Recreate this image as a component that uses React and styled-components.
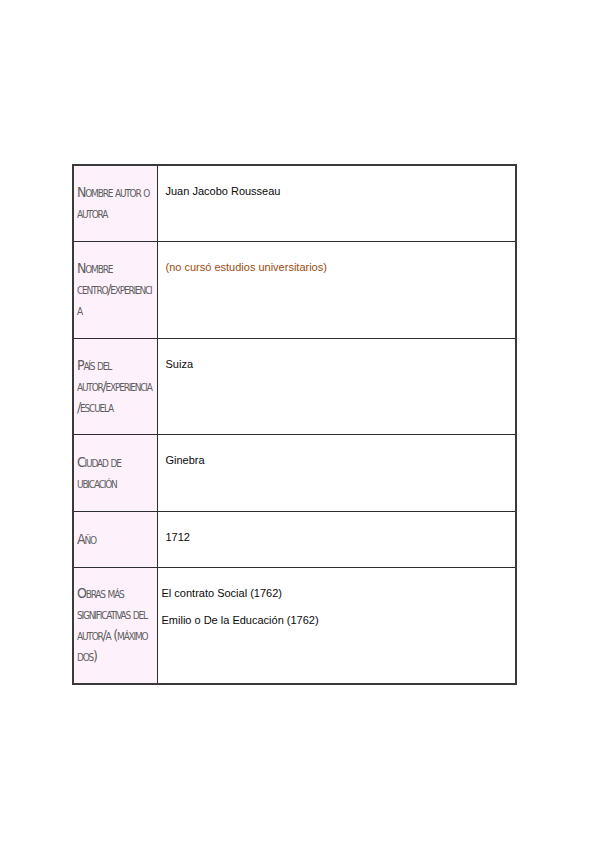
import { createGlobalStyle, styled } from 'styled-components';

const GlobalStyle = createGlobalStyle`
  html, body {
    margin: 0;
    padding: 0;
    background: #ffffff;
  }
`;

const rows = [
  { label: ['Nombre autor o', 'autora'], height: 76, content: ['Juan Jacobo Rousseau'] },
  { label: ['Nombre', 'centro/experienci', 'a'], height: 97, content: ['(no cursó estudios universitarios)'], muted: true },
  { label: ['País del', 'autor/experiencia', '/escuela'], height: 96, content: ['Suiza'] },
  { label: ['Ciudad de', 'ubicación'], height: 77, content: ['Ginebra'] },
  { label: ['Año'], height: 56, content: ['1712'] },
  {
    label: ['Obras más', 'significativas del', 'autor/a (máximo', 'dos)'],
    height: 117,
    content: ['El contrato Social (1762)', 'Emilio o De la Educación (1762)'],
    tight: true,
  },
];

const App = () => {
  return (
    <>
      <GlobalStyle />
      <Page>
        <Sheet>
          <tbody>
            {rows.map((row) => (
              <Row key={row.label.join(' ')} $height={row.height}>
                <Label>
                  {row.label.map((line) => (
                    <LabelLine key={line}>{line}</LabelLine>
                  ))}
                </Label>
                <Value $muted={row.muted} $tight={row.tight}>
                  {row.content.map((line) => (
                    <ValueLine key={line}>{line}</ValueLine>
                  ))}
                </Value>
              </Row>
            ))}
          </tbody>
        </Sheet>
      </Page>
    </>
  );
};

const Page = styled.div`
  width: 600px;
  min-height: 848px;
  box-sizing: border-box;
  padding: 164px 0 0 72px;
  background: #ffffff;
`;

const Sheet = styled.table`
  width: 445px;
  border-collapse: collapse;
  table-layout: fixed;
  border: 2px solid #3a3a3a;
`;

const Row = styled.tr`
  height: ${(props) => props.$height}px;
`;

const Label = styled.td`
  width: 84px;
  box-sizing: border-box;
  padding: 0 0 0 3px;
  background: #fdf1fc;
  border: 1.5px solid #2e2e2e;
  vertical-align: middle;
  color: #5f5f5f;
  font-family: 'Liberation Sans Narrow', 'DejaVu Sans Condensed', sans-serif;
  font-variant: small-caps;
  font-size: 14px;
  letter-spacing: -1.2px;
  overflow: hidden;
`;

const LabelLine = styled.div`
  line-height: 21px;
  white-space: nowrap;
`;

const Value = styled.td`
  box-sizing: border-box;
  padding: ${(props) => (props.$tight ? '18px 4px 0 4px' : '18px 8px 0 8px')};
  border: 1.5px solid #2e2e2e;
  vertical-align: top;
  color: ${(props) => (props.$muted ? '#9a4c10' : '#0a0a0a')};
  font-family: 'Liberation Sans', Arial, sans-serif;
  font-size: 11px;
`;

const ValueLine = styled.p`
  margin: 0 0 13px 0;
  line-height: 14px;
`;

export default App;
